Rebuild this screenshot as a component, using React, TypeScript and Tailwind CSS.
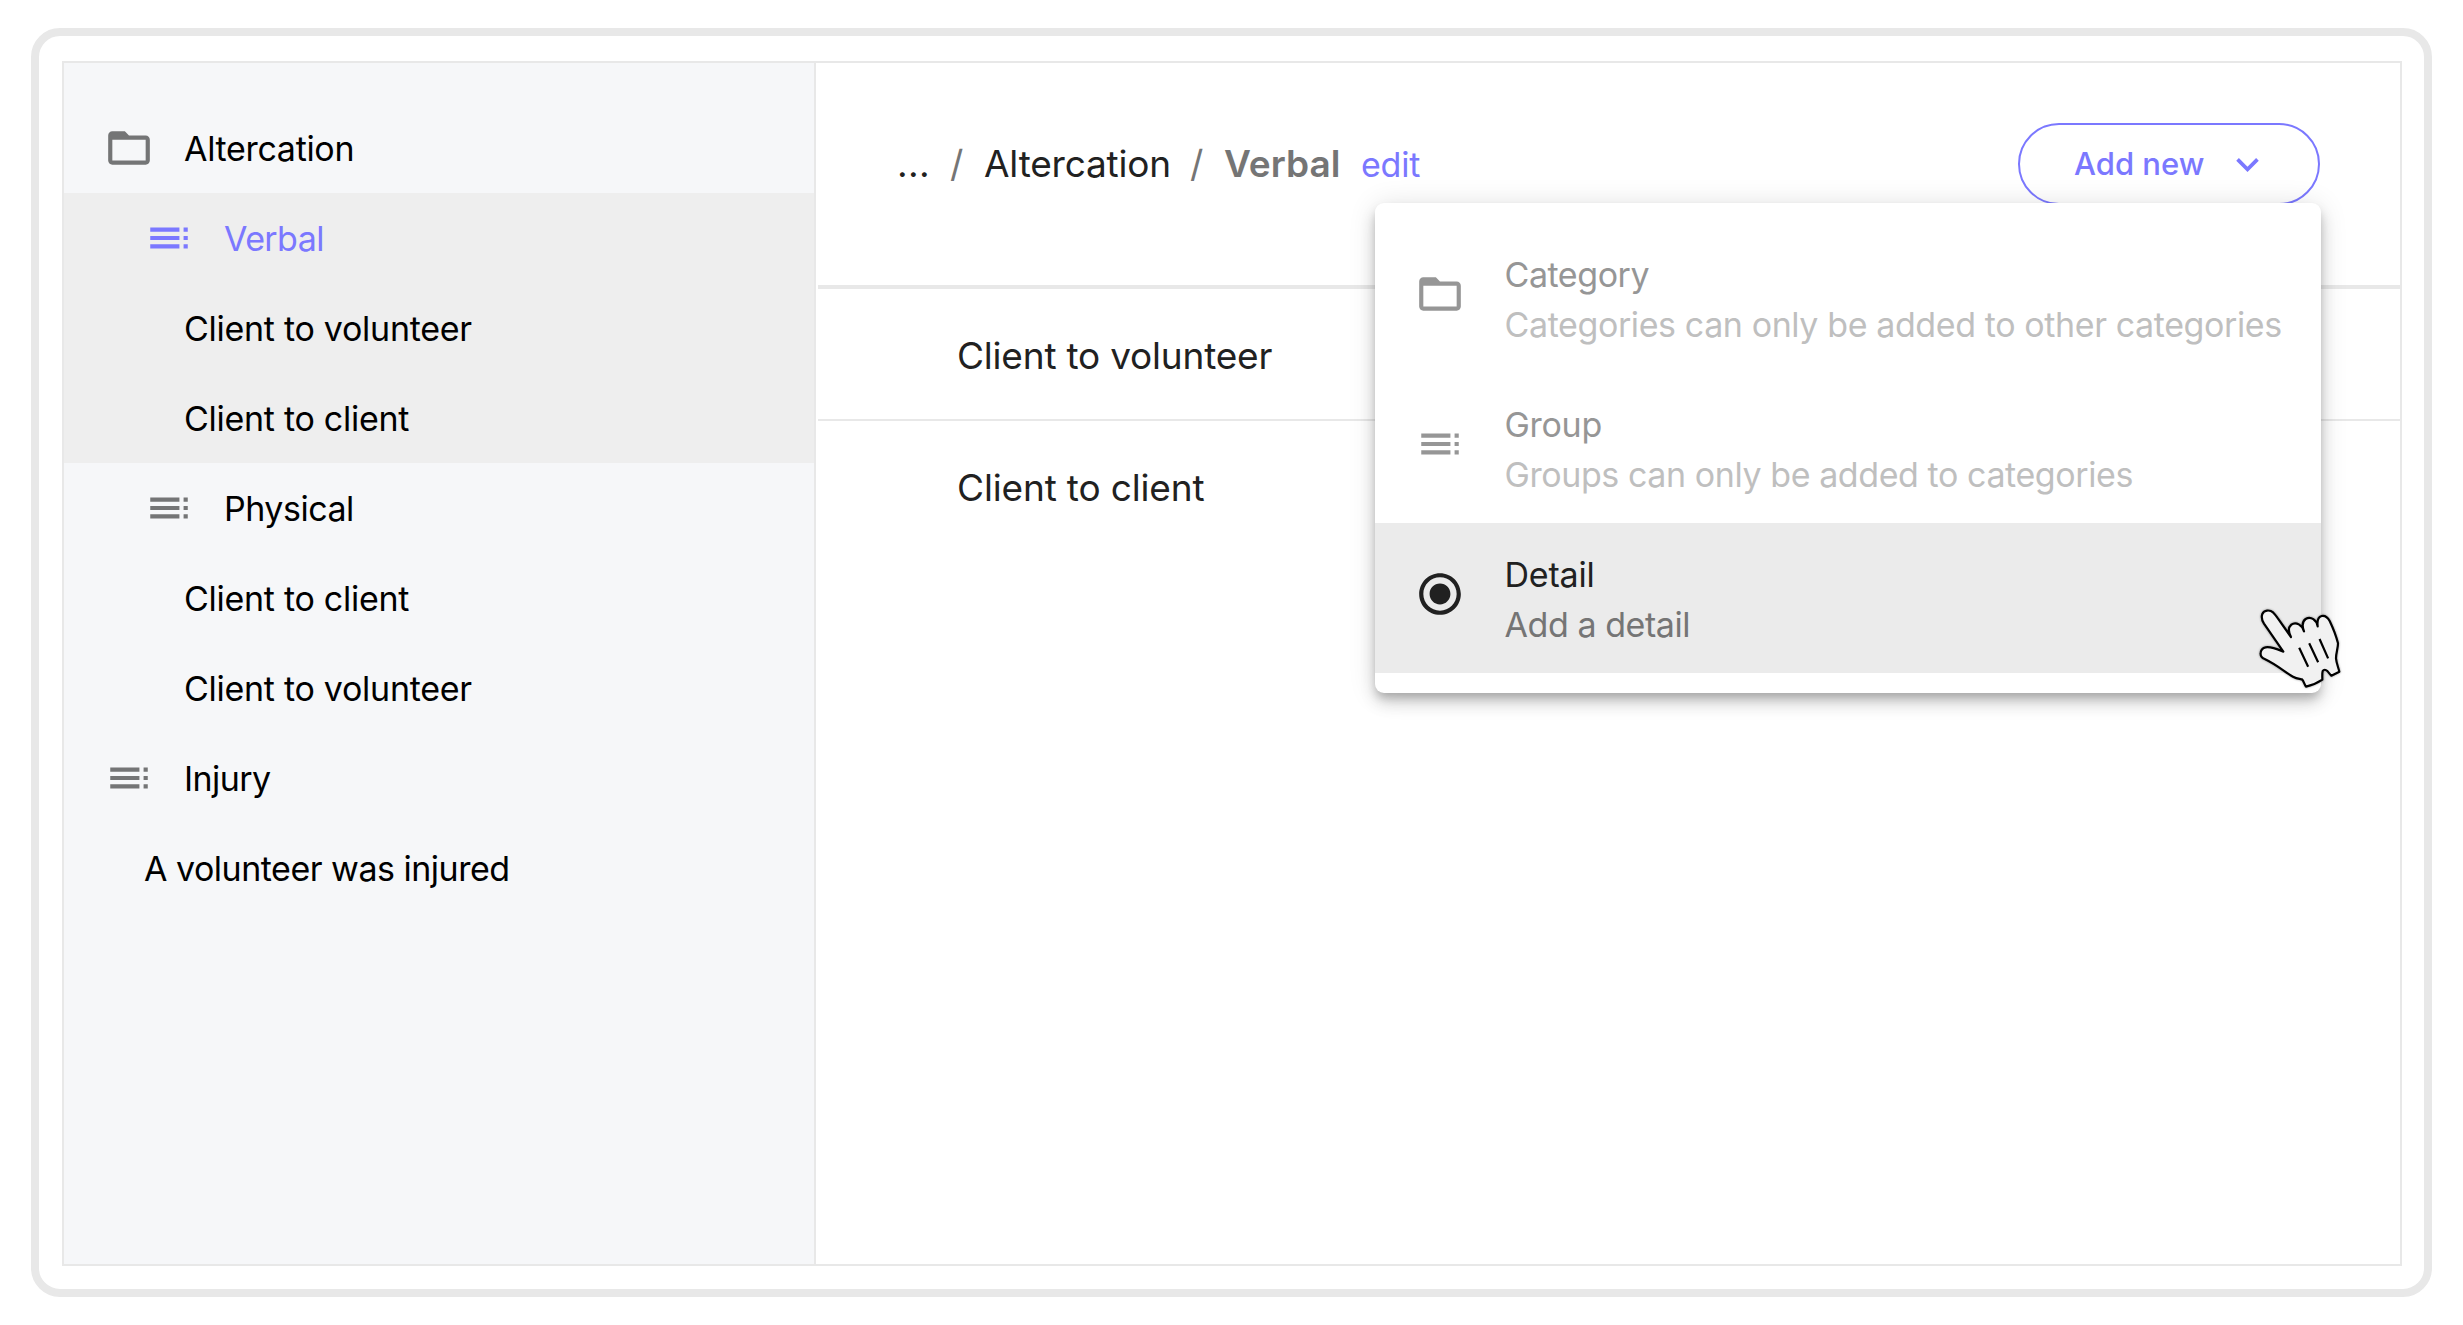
import type { ReactNode } from "react";

type IconProps = { className?: string };

function FolderIcon({ className = "" }: IconProps) {
  return (
    <svg viewBox="0 0 24 24" className={`size-[50px] shrink-0 fill-current ${className}`}>
      <path d="M20 6h-8l-2-2H4c-1.1 0-1.99.9-1.99 2L2 18c0 1.1.9 2 2 2h16c1.1 0 2-.9 2-2V8c0-1.1-.9-2-2-2zm0 12H4V8h16v10z" />
    </svg>
  );
}

function GroupIcon({ className = "" }: IconProps) {
  return (
    <svg viewBox="0 0 24 24" className={`size-[50px] shrink-0 fill-current ${className}`}>
      <path d="M3 9h14V7H3v2zm0 4h14v-2H3v2zm0 4h14v-2H3v2zm16 0h2v-2h-2v2zm0-10v2h2V7h-2zm0 6h2v-2h-2v2z" />
    </svg>
  );
}

function DetailIcon({ className = "" }: IconProps) {
  return (
    <svg viewBox="0 0 24 24" className={`size-[50px] shrink-0 fill-current ${className}`}>
      <path d="M12 7c-2.76 0-5 2.24-5 5s2.24 5 5 5 5-2.24 5-5-2.24-5-5-5zm0-5C6.48 2 2 6.48 2 12s4.48 10 10 10 10-4.48 10-10S17.52 2 12 2zm0 18c-4.42 0-8-3.58-8-8s3.58-8 8-8 8 3.58 8 8-3.58 8-8 8z" />
    </svg>
  );
}

function ChevronIcon() {
  return (
    <svg viewBox="0 0 24 24" className="size-[45px] shrink-0 fill-current">
      <path d="M16.59 8.59 12 13.17 7.41 8.59 6 10l6 6 6-6z" />
    </svg>
  );
}

function HandCursor() {
  return (
    <svg
      viewBox="0 0 390 330"
      className="pointer-events-none absolute left-[2230px] top-[590px] h-[110px] w-[130px] drop-shadow-[0_0_1px_rgba(0,0,0,0.4)]"
      stroke="#000"
      strokeWidth="6.6"
      strokeLinejoin="round"
      strokeLinecap="round"
      fill="none"
    >
      <path
        fill="#f1f1f1"
        d="M160 185 L102 101 C95 90 94 80 97 72 C102 60 119 58 130 68 C134 72 138 77 142 83 L183 141 C175 126 175 112 184 104 C198 93 217 106 222 124 C216 108 217 94 227 87 C243 77 260 91 263 109 C261 93 265 81 275 78 C285 76 293 82 299 93 C309 114 318 136 324 160 C324 176 318 188 318 205 C319 219 325 232 328 245 L304 257 C299 252 296 247 292 243 C287 238 281 238 278 243 C276 250 277 261 277 269 C262 279 247 286 228 290 C223 283 222 275 216 268 C206 266 198 265 189 260 C165 246 138 223 104 207 C94 203 91 195 92 188 C93 179 98 174 107 172 C123 169 143 178 160 185 Z"
      />
      <path strokeLinecap="square" d="M209 176l24 51M239 163l24 51M270 150l23 52" />
    </svg>
  );
}

type TreeRowProps = { label: string; indent: string; tracking: string; icon?: ReactNode; color?: string };

function TreeRow({ label, indent, tracking, icon, color = "text-black" }: TreeRowProps) {
  return (
    <li className={`flex h-[90px] items-center ${indent} ${color}`}>
      {icon}
      <span className={`pt-0.5 text-[34px] leading-10 whitespace-nowrap ${tracking}`}>{label}</span>
    </li>
  );
}

function Sidebar() {
  return (
    <nav className="w-[752px] shrink-0 border-r-2 border-[#e8e8e8] bg-[#f6f7f9] pt-10">
      <ul>
        <TreeRow label="Altercation" indent="pl-10" tracking="tracking-[-0.32px]" icon={<FolderIcon className="mr-[30px] text-[#747576]" />} />
      </ul>
      <ul className="bg-[#eeeeee]">
        <TreeRow label="Verbal" indent="pl-20" tracking="tracking-[-0.6px]" color="text-[#7b78ff]" icon={<GroupIcon className="mr-[30px]" />} />
        <TreeRow label="Client to volunteer" indent="pl-[120px]" tracking="tracking-[-0.28px]" />
        <TreeRow label="Client to client" indent="pl-[120px]" tracking="tracking-[-0.28px]" />
      </ul>
      <ul>
        <TreeRow label="Physical" indent="pl-20" tracking="tracking-[-0.49px]" icon={<GroupIcon className="mr-[30px] text-[#747576]" />} />
        <TreeRow label="Client to client" indent="pl-[120px]" tracking="tracking-[-0.28px]" />
        <TreeRow label="Client to volunteer" indent="pl-[120px]" tracking="tracking-[-0.28px]" />
        <TreeRow label="Injury" indent="pl-10" tracking="tracking-[-0.58px]" icon={<GroupIcon className="mr-[30px] text-[#747576]" />} />
        <TreeRow label="A volunteer was injured" indent="pl-20" tracking="tracking-[-0.5px]" />
      </ul>
    </nav>
  );
}

function Header() {
  return (
    <header className="flex h-[226px] items-start justify-between border-b-4 border-[#e8e8e8] pt-[60px] pr-20 pl-[79px]">
      <div className="flex h-[82px] items-center text-[37px] leading-[44px] whitespace-nowrap text-[#212121]">
        <span className="w-[53px] tracking-[0.3px]">...</span>
        <span className="w-[34px] text-[#757575]">/</span>
        <span className="w-[206px] tracking-[-0.2px]">Altercation</span>
        <span className="w-[34px] text-[#757575]">/</span>
        <span className="w-[137px] font-semibold text-[#757575]">Verbal</span>
        <span className="pt-px text-[34px] tracking-[-0.2px] text-[#7b78ff]">edit</span>
      </div>
      <button className="flex h-[82px] w-[302px] items-center rounded-full border-2 border-[#7b78ff] pl-[54px] text-[#7b78ff]">
        <span className="w-[151px] text-left text-[31px] leading-9 font-medium whitespace-nowrap">Add new</span>
        <ChevronIcon />
      </button>
    </header>
  );
}

type MenuRowProps = {
  icon: ReactNode;
  title: string;
  titleClass: string;
  text: string;
  textClass: string;
  rowClass?: string;
};

function MenuRow({ icon, title, titleClass, text, textClass, rowClass = "" }: MenuRowProps) {
  return (
    <li className={`flex h-[150px] pl-10 ${rowClass}`}>
      <div className="mr-10 pt-[46px]">{icon}</div>
      <div className="pt-[27px] text-[34px] leading-[50px] whitespace-nowrap">
        <div className={titleClass}>{title}</div>
        <div className={textClass}>{text}</div>
      </div>
    </li>
  );
}

function AddMenu() {
  return (
    <ul className="absolute top-[203px] left-[1374.5px] w-[946.5px] rounded-[9px] bg-white py-5 shadow-[0_6px_10px_-2px_rgba(0,0,0,0.2),0_10px_16px_0_rgba(0,0,0,0.14),0_2px_28px_0_rgba(0,0,0,0.12)]">
      <MenuRow
        icon={<FolderIcon className="text-[#969696]" />}
        title="Category"
        titleClass="tracking-[-0.45px] text-[#969696]"
        text="Categories can only be added to other categories"
        textClass="tracking-[-0.4px] text-[#bfbfbf]"
      />
      <MenuRow
        icon={<GroupIcon className="text-[#969696]" />}
        title="Group"
        titleClass="tracking-[-0.3px] text-[#969696]"
        text="Groups can only be added to categories"
        textClass="tracking-[-0.42px] text-[#bfbfbf]"
      />
      <MenuRow
        icon={<DetailIcon className="text-[#212121]" />}
        title="Detail"
        titleClass="tracking-[-0.2px] text-[#212121]"
        text="Add a detail"
        textClass="tracking-[-0.43px] text-[#757575]"
        rowClass="bg-[#ebebeb]"
      />
    </ul>
  );
}

export default function App() {
  return (
    <div className="relative h-[1325px] w-[2463px] overflow-hidden bg-white px-[31px] py-7 font-[Inter,'Liberation_Sans',sans-serif]">
      <div className="h-[1269px] rounded-[29px] border-8 border-[#e8e8e8] px-[23px] py-[25px]">
        <div className="flex h-[1205px] w-[2340px] border-2 border-[#e8e8e8]">
          <Sidebar />
          <main className="grow pl-0.5">
            <Header />
            <ul className="text-[37px] text-[#212121]">
              <li className="flex h-[132px] items-center border-b-2 border-[#e8e8e8] pl-[139px]">
                <span className="pt-[3px] leading-[44px] tracking-[-0.2px]">Client to volunteer</span>
              </li>
              <li className="flex h-[132px] items-center pl-[139px]">
                <span className="pt-0.5 leading-[44px] tracking-[-0.15px]">Client to client</span>
              </li>
            </ul>
          </main>
        </div>
      </div>
      <AddMenu />
      <HandCursor />
    </div>
  );
}
